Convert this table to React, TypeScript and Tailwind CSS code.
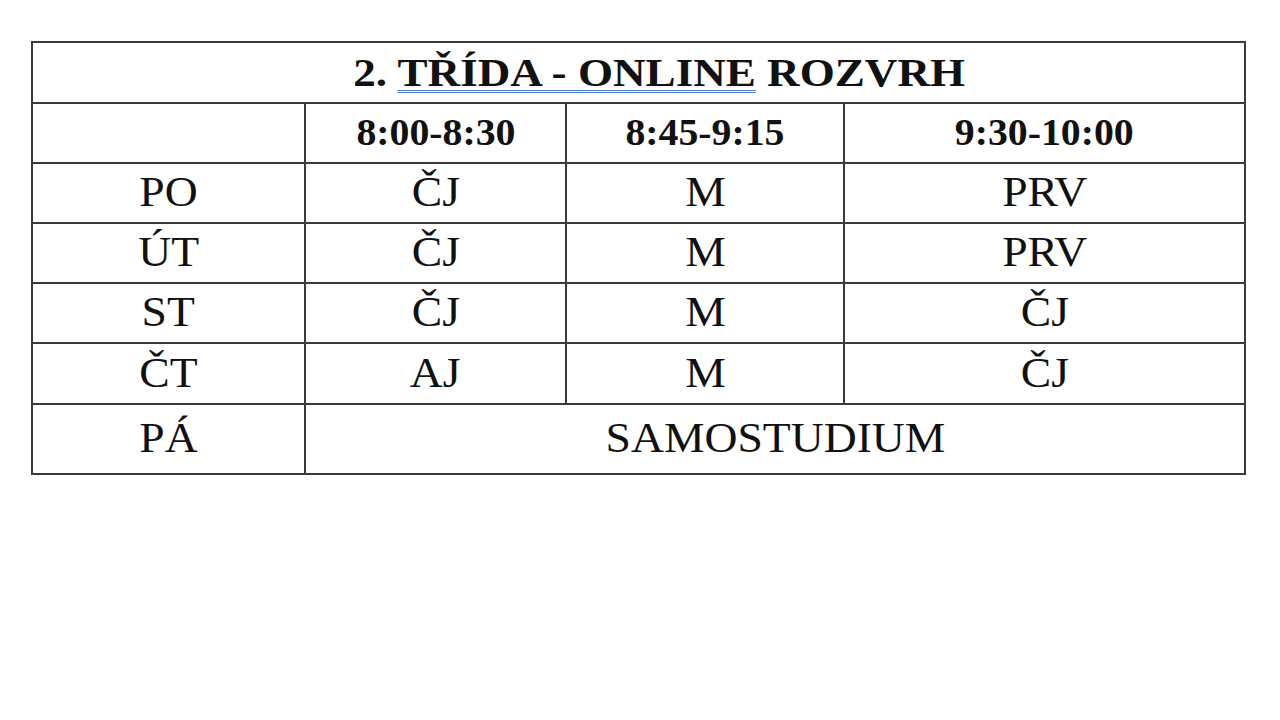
const slots = ['8:00-8:30', '8:45-9:15', '9:30-10:00'];

const days: Array<{ day: string; lessons: string[] }> = [
  { day: 'PO', lessons: ['ČJ', 'M', 'PRV'] },
  { day: 'ÚT', lessons: ['ČJ', 'M', 'PRV'] },
  { day: 'ST', lessons: ['ČJ', 'M', 'ČJ'] },
  { day: 'ČT', lessons: ['AJ', 'M', 'ČJ'] },
];

const cell = 'border-2 border-[#3a3a3a] p-0 text-center align-middle';
// the slide text is a bit wider than plain Times, so stretch it a little
const bodyText = 'inline-block scale-x-[1.1] text-[41.5px] leading-none text-[#111]';

export default function App() {
  return (
    <div className="h-[720px] w-[1280px] bg-white pl-[31px] pt-[41px] font-['Liberation_Serif','Times_New_Roman',serif]">
      <table className="w-[1213px] table-fixed border-collapse">
        <colgroup>
          <col className="w-[273px]" />
          <col className="w-[261px]" />
          <col className="w-[278px]" />
          <col className="w-[401px]" />
        </colgroup>
        <tbody>
          <tr className="h-[61px]">
            <td colSpan={4} className={`${cell} pl-[42px]`}>
              <span className="inline-block scale-x-[1.1] text-[41px] leading-none font-bold whitespace-nowrap text-[#111]">
                2.{' '}
                <span className="underline decoration-[#4f7bd8] decoration-double decoration-1 underline-offset-[4px]">
                  TŘÍDA - ONLINE
                </span>{' '}
                ROZVRH
              </span>
            </td>
          </tr>
          <tr className="h-[60px]">
            <td className={cell} />
            {slots.map((slot) => (
              <td key={slot} className={cell}>
                <span className="inline-block scale-x-[1.075] text-[37px] leading-none font-bold text-[#111]">
                  {slot}
                </span>
              </td>
            ))}
          </tr>
          {days.map(({ day, lessons }, i) => (
            <tr key={day} className={i === 3 ? 'h-[61px]' : 'h-[60px]'}>
              <td className={cell}>
                <span className={bodyText}>{day}</span>
              </td>
              {lessons.map((lesson, j) => (
                <td key={j} className={cell}>
                  <span className={bodyText}>{lesson}</span>
                </td>
              ))}
            </tr>
          ))}
          <tr className="h-[70px]">
            <td className={cell}>
              <span className={bodyText}>PÁ</span>
            </td>
            <td colSpan={3} className={cell}>
              <span className={bodyText}>SAMOSTUDIUM</span>
            </td>
          </tr>
        </tbody>
      </table>
    </div>
  );
}
